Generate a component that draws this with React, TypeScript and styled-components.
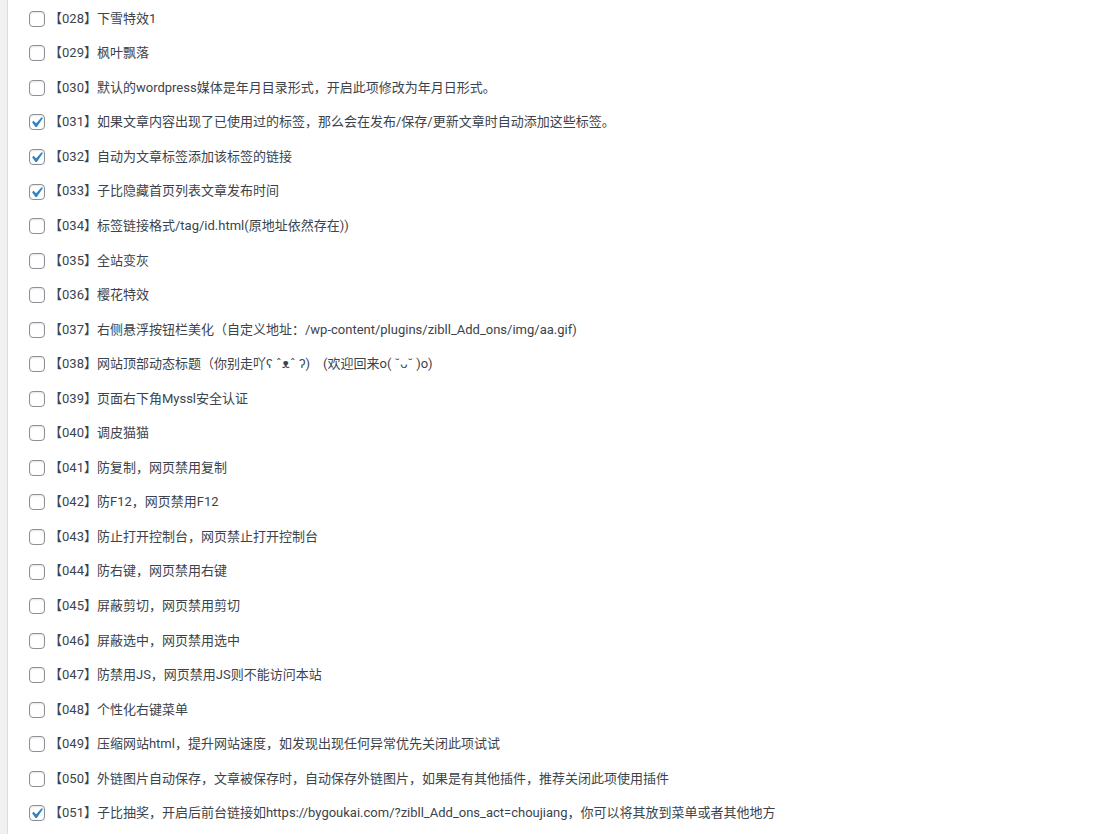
import React from "react";
import styled, { createGlobalStyle } from "styled-components";

const GlobalStyle = createGlobalStyle`
  html, body {
    margin: 0;
    padding: 0;
    background: #f0f0f1;
  }
  body {
    font-family: Roboto, "Noto Sans CJK SC", sans-serif;
    font-size: 13px;
    color: #3c434a;
  }
`;

const Panel = styled.div`
  margin-left: 7px;
  min-height: 834px;
  background: #ffffff;
  border-left: 1px solid #dcdcde;
  box-sizing: border-box;
`;

const List = styled.ul`
  list-style: none;
  margin: 0;
  padding: 1.5px 0 0 21px;
`;

const Row = styled.li`
  height: 34.55px;
  display: flex;
  align-items: center;
`;

const Label = styled.label`
  display: flex;
  align-items: center;
  gap: 4px;
  cursor: pointer;
  line-height: 1.4;
  white-space: nowrap;
`;

const Box = styled.span<{ $checked: boolean }>`
  position: relative;
  flex: none;
  width: 16px;
  height: 16px;
  box-sizing: border-box;
  border: 1px solid #8c8f94;
  border-radius: 4px;
  background: #ffffff;
  box-shadow: inset 0 1px 2px rgba(0, 0, 0, 0.1);
`;

const Check = styled.svg`
  position: absolute;
  top: -3px;
  left: -4px;
  width: 21px;
  height: 21px;
`;

const Text = styled.span`
  font-size: 13px;
  color: #3c434a;
`;

const items: [string, string, boolean][] = [
  ["028", "下雪特效1", false],
  ["029", "枫叶飘落", false],
  ["030", "默认的wordpress媒体是年月目录形式，开启此项修改为年月日形式。", false],
  ["031", "如果文章内容出现了已使用过的标签，那么会在发布/保存/更新文章时自动添加这些标签。", true],
  ["032", "自动为文章标签添加该标签的链接", true],
  ["033", "子比隐藏首页列表文章发布时间", true],
  ["034", "标签链接格式/tag/id.html(原地址依然存在))", false],
  ["035", "全站变灰", false],
  ["036", "樱花特效", false],
  ["037", "右侧悬浮按钮栏美化（自定义地址：/wp-content/plugins/zibll_Add_ons/img/aa.gif)", false],
  ["038", "网站顶部动态标题（你别走吖ʕ ˆᴥˆ ʔ)　(欢迎回来o( ˘ᴗ˘ )o)", false],
  ["039", "页面右下角Myssl安全认证", false],
  ["040", "调皮猫猫", false],
  ["041", "防复制，网页禁用复制", false],
  ["042", "防F12，网页禁用F12", false],
  ["043", "防止打开控制台，网页禁止打开控制台", false],
  ["044", "防右键，网页禁用右键", false],
  ["045", "屏蔽剪切，网页禁用剪切", false],
  ["046", "屏蔽选中，网页禁用选中", false],
  ["047", "防禁用JS，网页禁用JS则不能访问本站", false],
  ["048", "个性化右键菜单", false],
  ["049", "压缩网站html，提升网站速度，如发现出现任何异常优先关闭此项试试", false],
  ["050", "外链图片自动保存，文章被保存时，自动保存外链图片，如果是有其他插件，推荐关闭此项使用插件", false],
  ["051", "子比抽奖，开启后前台链接如https://bygoukai.com/?zibll_Add_ons_act=choujiang，你可以将其放到菜单或者其他地方", true],
];

const CheckRow: React.FC<{ num: string; text: string; initial: boolean }> = ({ num, text, initial }) => {
  const [checked, setChecked] = React.useState(initial);
  return (
    <Row>
      <Label onClick={() => setChecked((c) => !c)}>
        <Box $checked={checked} role="checkbox" aria-checked={checked}>
          {checked && (
            <Check viewBox="0 0 20 20">
              <path d="M14.83 4.89l1.34.94-5.81 8.38H9.02L5.78 9.67l1.34-1.25 2.57 2.4z" fill="#3582c4" />
            </Check>
          )}
        </Box>
        <Text>【{num}】{text}</Text>
      </Label>
    </Row>
  );
};

export default function App() {
  return (
    <>
      <GlobalStyle />
      <Panel>
        <List>
          {items.map(([n, t, c]) => (
            <CheckRow key={n} num={n} text={t} initial={c} />
          ))}
        </List>
      </Panel>
    </>
  );
}
